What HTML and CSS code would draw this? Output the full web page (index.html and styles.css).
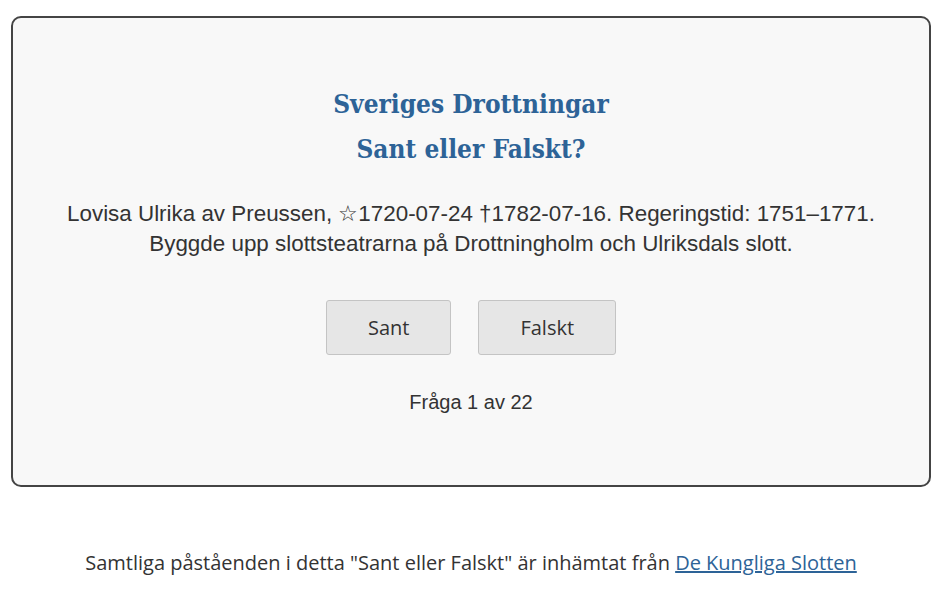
FILE: index.html
```html
<!DOCTYPE html>
<html lang="sv">
<head>
<meta charset="utf-8">
<title>Sveriges Drottningar</title>
<link rel="stylesheet" href="styles.css">
</head>
<body>
<main class="page">
  <section class="card">
    <h1 class="title">Sveriges Drottningar<br>Sant eller Falskt?</h1>
    <p class="statement">Lovisa Ulrika av Preussen, ☆1720-07-24 †1782-07-16. Regeringstid: 1751–1771.<br>Byggde upp slottsteatrarna på Drottningholm och Ulriksdals slott.</p>
    <div class="actions">
      <button class="btn" type="button">Sant</button>
      <button class="btn" type="button">Falskt</button>
    </div>
    <p class="progress">Fråga 1 av 22</p>
  </section>
  <p class="footer">Samtliga påståenden i detta "Sant eller Falskt" är inhämtat från <a href="#" class="footer-link">De Kungliga Slotten</a></p>
</main>
</body>
</html>
```

FILE: styles.css
```css
* { box-sizing: border-box; }
html, body { margin: 0; padding: 0; background: #fff; }
body { font-family: "Liberation Sans", Arial, sans-serif; color: #333; }
.page { padding: 16px 9px 0 11px; }
.card {
  width: 920px;
  height: 471px;
  border: 2px solid #444;
  border-radius: 10px;
  background: #f8f8f8;
  padding-top: 64px;
  text-align: center;
}
.title {
  margin: 0;
  font-family: "DejaVu Serif Condensed", "DejaVu Serif", serif;
  font-weight: bold;
  font-size: 26px;
  line-height: 45px;
  color: #2d6397;
}
.statement {
  margin: 27px 0 0;
  font-size: 22.4px;
  line-height: 30px;
  color: #333;
}
.actions {
  margin-top: 41px;
  display: flex;
  justify-content: center;
  gap: 27px;
}
.btn {
  height: 55px;
  padding: 0 41px;
  font-family: "Open Sans", sans-serif;
  font-size: 20px;
  color: #333;
  background: #e6e6e6;
  border: 1px solid #c4c4c4;
  border-radius: 3px;
}
.progress {
  margin: 32px 0 0;
  font-size: 20px;
  line-height: 30px;
}
.footer {
  margin: 61px 0 0;
  text-align: center;
  font-family: "Open Sans", sans-serif;
  font-size: 20px;
  line-height: 30px;
  color: #333;
}
.footer-link { color: #2d6397; }
```
